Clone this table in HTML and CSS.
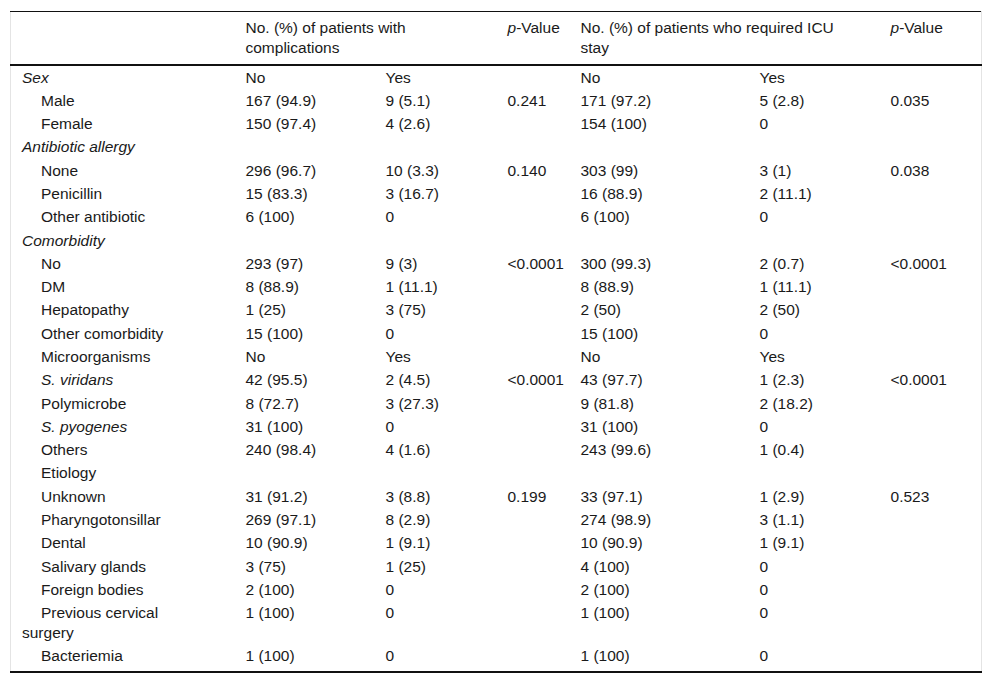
FILE: index.html
```html
<!DOCTYPE html>
<html>
<head>
<meta charset="utf-8">
<link rel="stylesheet" href="styles.css">
</head>
<body>
<table class="data">
  <colgroup>
    <col class="c1"><col class="c2"><col class="c3"><col class="c4"><col class="c5"><col class="c6"><col class="c7">
  </colgroup>
  <thead>
    <tr>
      <th></th>
      <th colspan="2">No. (%) of patients with complications</th>
      <th><i>p</i>-Value</th>
      <th colspan="2" class="icu">No. (%) of patients who required ICU stay</th>
      <th><i>p</i>-Value</th>
    </tr>
  </thead>
  <tbody>
    <tr><td class="grp"><i>Sex</i></td><td>No</td><td>Yes</td><td></td><td>No</td><td>Yes</td><td></td></tr>
    <tr><td class="sub">Male</td><td>167 (94.9)</td><td>9 (5.1)</td><td>0.241</td><td>171 (97.2)</td><td>5 (2.8)</td><td>0.035</td></tr>
    <tr><td class="sub">Female</td><td>150 (97.4)</td><td>4 (2.6)</td><td></td><td>154 (100)</td><td>0</td><td></td></tr>
    <tr><td class="grp"><i>Antibiotic allergy</i></td><td></td><td></td><td></td><td></td><td></td><td></td></tr>
    <tr><td class="sub">None</td><td>296 (96.7)</td><td>10 (3.3)</td><td>0.140</td><td>303 (99)</td><td>3 (1)</td><td>0.038</td></tr>
    <tr><td class="sub">Penicillin</td><td>15 (83.3)</td><td>3 (16.7)</td><td></td><td>16 (88.9)</td><td>2 (11.1)</td><td></td></tr>
    <tr><td class="sub">Other antibiotic</td><td>6 (100)</td><td>0</td><td></td><td>6 (100)</td><td>0</td><td></td></tr>
    <tr><td class="grp"><i>Comorbidity</i></td><td></td><td></td><td></td><td></td><td></td><td></td></tr>
    <tr><td class="sub">No</td><td>293 (97)</td><td>9 (3)</td><td>&lt;0.0001</td><td>300 (99.3)</td><td>2 (0.7)</td><td>&lt;0.0001</td></tr>
    <tr><td class="sub">DM</td><td>8 (88.9)</td><td>1 (11.1)</td><td></td><td>8 (88.9)</td><td>1 (11.1)</td><td></td></tr>
    <tr><td class="sub">Hepatopathy</td><td>1 (25)</td><td>3 (75)</td><td></td><td>2 (50)</td><td>2 (50)</td><td></td></tr>
    <tr><td class="sub">Other comorbidity</td><td>15 (100)</td><td>0</td><td></td><td>15 (100)</td><td>0</td><td></td></tr>
    <tr><td class="sub">Microorganisms</td><td>No</td><td>Yes</td><td></td><td>No</td><td>Yes</td><td></td></tr>
    <tr><td class="sub"><i>S. viridans</i></td><td>42 (95.5)</td><td>2 (4.5)</td><td>&lt;0.0001</td><td>43 (97.7)</td><td>1 (2.3)</td><td>&lt;0.0001</td></tr>
    <tr><td class="sub">Polymicrobe</td><td>8 (72.7)</td><td>3 (27.3)</td><td></td><td>9 (81.8)</td><td>2 (18.2)</td><td></td></tr>
    <tr><td class="sub"><i>S. pyogenes</i></td><td>31 (100)</td><td>0</td><td></td><td>31 (100)</td><td>0</td><td></td></tr>
    <tr><td class="sub">Others</td><td>240 (98.4)</td><td>4 (1.6)</td><td></td><td>243 (99.6)</td><td>1 (0.4)</td><td></td></tr>
    <tr><td class="sub">Etiology</td><td></td><td></td><td></td><td></td><td></td><td></td></tr>
    <tr><td class="sub">Unknown</td><td>31 (91.2)</td><td>3 (8.8)</td><td>0.199</td><td>33 (97.1)</td><td>1 (2.9)</td><td>0.523</td></tr>
    <tr><td class="sub">Pharyngotonsillar</td><td>269 (97.1)</td><td>8 (2.9)</td><td></td><td>274 (98.9)</td><td>3 (1.1)</td><td></td></tr>
    <tr><td class="sub">Dental</td><td>10 (90.9)</td><td>1 (9.1)</td><td></td><td>10 (90.9)</td><td>1 (9.1)</td><td></td></tr>
    <tr><td class="sub">Salivary glands</td><td>3 (75)</td><td>1 (25)</td><td></td><td>4 (100)</td><td>0</td><td></td></tr>
    <tr><td class="sub">Foreign bodies</td><td>2 (100)</td><td>0</td><td></td><td>2 (100)</td><td>0</td><td></td></tr>
    <tr><td class="sub">Previous cervical surgery</td><td>1 (100)</td><td>0</td><td></td><td>1 (100)</td><td>0</td><td></td></tr>
    <tr class="last"><td class="sub">Bacteriemia</td><td>1 (100)</td><td>0</td><td></td><td>1 (100)</td><td>0</td><td></td></tr>
  </tbody>
</table>
</body>
</html>
```
FILE: styles.css
```css
html, body {
  margin: 0;
  padding: 0;
  background: #fff;
}
body {
  padding: 11px 10px 0 10px;
  font-family: "Liberation Sans", Arial, sans-serif;
  font-size: 15.5px;
  color: #1a1a1a;
}
.data {
  width: 971px;
  table-layout: fixed;
  border-collapse: collapse;
  border-top: 1px solid #111;
  border-bottom: 2px solid #111;
  border-left: 1px solid #e4e4e4;
  border-right: 1px solid #e4e4e4;
}
.c1 { width: 229px; }
.c2 { width: 140px; }
.c3 { width: 122px; }
.c4 { width: 73px; }
.c5 { width: 179px; }
.c6 { width: 131px; }
.c7 { width: 97px; }
.data th {
  font-weight: normal;
  text-align: left;
  vertical-align: top;
  line-height: 20px;
  padding: 6px 6px;
  border-bottom: 2px solid #111;
}
.data th.icu {
  padding-right: 30px;
}
.data td {
  vertical-align: top;
  line-height: 20px;
  padding: 1.65px 6px;
}
.data td:first-child {
  padding-left: 11px;
  padding-right: 40px;
}
.data td.sub {
  text-indent: 19px;
}
.data tr.last td {
  padding-bottom: 4.5px;
}
```
